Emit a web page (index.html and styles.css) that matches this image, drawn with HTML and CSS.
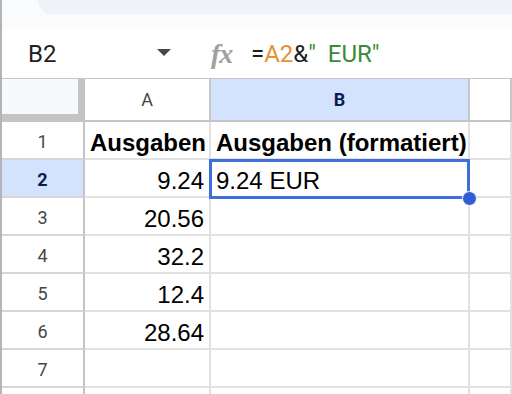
FILE: index.html
```html
<!DOCTYPE html>
<html lang="de">
<head>
<meta charset="utf-8">
<title>Tabelle</title>
<link rel="stylesheet" href="styles.css">
</head>
<body>
<div class="app">
  <div class="topbar"><div class="pill"></div></div>
  <div class="formula">
    <div class="namebox"><span class="ref">B2</span><span class="caret"></span></div>
    <span class="fx">fx</span>
    <div class="expr">=<span class="ref-a">A2</span>&amp;<span class="str">"  EUR"</span></div>
  </div>
  <div class="sheet">
    <div class="c corner"><div class="corner-in"></div></div>
    <div class="c ch">A</div>
    <div class="c ch sel">B</div>
    <div class="c ch"></div>

    <div class="c rh">1</div>
    <div class="c d bold">Ausgaben</div>
    <div class="c d bold">Ausgaben (formatiert)</div>
    <div class="c d"></div>

    <div class="c rh sel">2</div>
    <div class="c d num">9.24</div>
    <div class="c d">9.24 EUR</div>
    <div class="c d"></div>

    <div class="c rh">3</div>
    <div class="c d num">20.56</div>
    <div class="c d"></div>
    <div class="c d"></div>

    <div class="c rh">4</div>
    <div class="c d num">32.2</div>
    <div class="c d"></div>
    <div class="c d"></div>

    <div class="c rh">5</div>
    <div class="c d num">12.4</div>
    <div class="c d"></div>
    <div class="c d"></div>

    <div class="c rh">6</div>
    <div class="c d num">28.64</div>
    <div class="c d"></div>
    <div class="c d"></div>

    <div class="c rh">7</div>
    <div class="c d"></div>
    <div class="c d"></div>
    <div class="c d"></div>

    <div class="c rh"></div>
    <div class="c d"></div>
    <div class="c d"></div>
    <div class="c d"></div>

    <div class="selection"><span class="handle"></span></div>
  </div>
</div>
</body>
</html>
```

FILE: styles.css
```css
html, body {
  margin: 0;
  padding: 0;
  background: #ffffff;
}

.app {
  width: 512px;
  height: 394px;
  overflow: hidden;
  box-sizing: border-box;
  border-left: 2px solid #b4b4b4;
  background: #ffffff;
}

.topbar {
  height: 29px;
  background: #f9fbfd;
}

.pill {
  margin-left: 36px;
  height: 14px;
  background: #eff2f7;
  border-bottom-left-radius: 16px;
}

.formula {
  box-sizing: border-box;
  height: 50px;
  border-bottom: 1px solid #c7c7c7;
  display: flex;
  align-items: center;
  padding-left: 26px;
  font-family: Roboto, "Liberation Sans", sans-serif;
  font-size: 24px;
  color: #1f1f1f;
}

.namebox {
  width: 143px;
  display: flex;
  align-items: center;
  justify-content: space-between;
}

.caret {
  width: 0;
  height: 0;
  border-left: 7px solid transparent;
  border-right: 7px solid transparent;
  border-top: 7px solid #444746;
  margin-top: -3px;
}

.fx {
  margin-left: 40px;
  width: 28px;
  font-family: "Liberation Serif", serif;
  font-style: italic;
  font-weight: bold;
  font-size: 28px;
  color: #a0a0a0;
  letter-spacing: -1px;
}

.expr {
  margin-left: 12px;
  white-space: pre;
}

.ref-a { color: #e8912d; }
.str { color: #3b8a3b; }

.sheet {
  position: relative;
  display: grid;
  grid-template-columns: 83px 126px 259px 1fr;
  grid-template-rows: 43px repeat(8, 38px);
}

.c {
  box-sizing: border-box;
  border-right: 2px solid #e1e1e1;
  border-bottom: 2px solid #e1e1e1;
  min-width: 0;
}

.corner {
  background: #c4c4c4;
  border-right-color: #c4c4c4;
  border-bottom-color: #c4c4c4;
}

.corner-in {
  width: 76px;
  height: 35px;
  background: #f8f9fa;
}

.ch {
  border-right-color: #c7c7c7;
  border-bottom-color: #c4c4c4;
  display: flex;
  align-items: center;
  justify-content: center;
  font-family: Roboto, "Liberation Sans", sans-serif;
  font-size: 18px;
  color: #444746;
}

.rh {
  border-right-color: #c4c4c4;
  border-bottom-color: #d6d6d6;
  display: flex;
  align-items: center;
  justify-content: center;
  padding-top: 3px;
  font-family: Roboto, "Liberation Sans", sans-serif;
  font-size: 18px;
  color: #444746;
}

.sel {
  background: #d3e3fd;
  color: #0b1d4f;
  font-weight: bold;
}

.d {
  display: flex;
  align-items: flex-end;
  padding: 0 5px 3px 5px;
  font-family: "Liberation Sans", Arial, sans-serif;
  font-size: 24px;
  line-height: 24px;
  color: #000000;
  white-space: nowrap;
}

.num { justify-content: flex-end; }
.bold { font-weight: bold; }

.selection {
  position: absolute;
  left: 207px;
  top: 80px;
  width: 261px;
  height: 40px;
  box-sizing: border-box;
  border: 3px solid #3f6fd8;
}

.handle {
  position: absolute;
  left: 250px;
  top: 29px;
  width: 15px;
  height: 15px;
  box-sizing: border-box;
  border-radius: 50%;
  background: #2f5fd0;
  border: 1.5px solid #ffffff;
}
```
